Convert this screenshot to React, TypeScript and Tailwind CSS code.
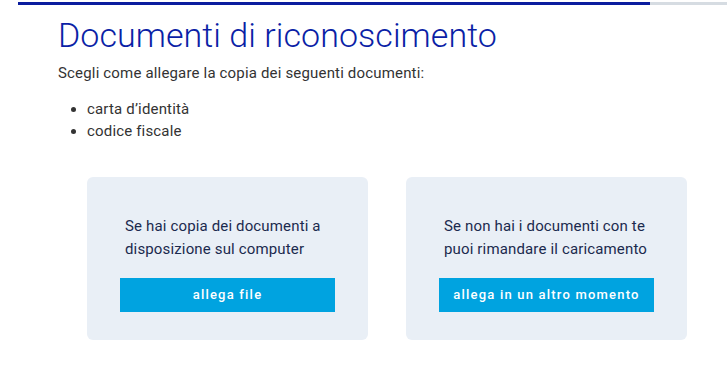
import React from 'react'

const cards = [
  {
    lines: ['Se hai copia dei documenti a', 'disposizione sul computer'],
    cta: 'allega file',
  },
  {
    lines: ['Se non hai i documenti con te', 'puoi rimandare il caricamento'],
    cta: 'allega in un altro momento',
  },
]

export default function App() {
  return (
    <div className="min-h-[365px] w-[727px] bg-white font-['Roboto',sans-serif]">
      {/* Progress bar */}
      <div className="ml-[18px] mt-[2px] flex h-[3px]">
        <div className="h-full w-[632px] bg-[#0a1c9e]" />
        <div className="h-full flex-1 bg-[#d6dce2]" />
      </div>

      <div className="pl-[58px]">
        <h1 className="mt-[10px] text-[34px] font-light leading-[40px] tracking-[0.05px] text-[#0b1fa6]">
          Documenti di riconoscimento
        </h1>
        <p className="mt-[7px] text-[15px] leading-[22px] tracking-[0.17px] text-[#333]">
          Scegli come allegare la copia dei seguenti documenti:
        </p>
        <ul className="mt-[14px] list-disc pl-[29px] text-[15px] leading-[22px] tracking-[0.17px] text-[#333]">
          <li>carta d’identità</li>
          <li>codice fiscale</li>
        </ul>
      </div>

      <div className="ml-[87px] mt-[35px] grid w-[600px] grid-cols-2 gap-[38px]">
        {cards.map((c) => (
          <div
            key={c.cta}
            className="rounded-md bg-[#e9eff6] px-[33px] pb-[28px] pt-[38px]"
          >
            <p className="pl-[5px] text-[15px] leading-[23px] tracking-[0.15px] text-[#1b2a4e]">
              {c.lines[0]}
              <br />
              {c.lines[1]}
            </p>
            <button className="mt-[17px] h-[34px] w-full bg-[#00a3e0] text-[13px] font-medium tracking-[1.2px] text-white">
              {c.cta}
            </button>
          </div>
        ))}
      </div>
    </div>
  )
}
